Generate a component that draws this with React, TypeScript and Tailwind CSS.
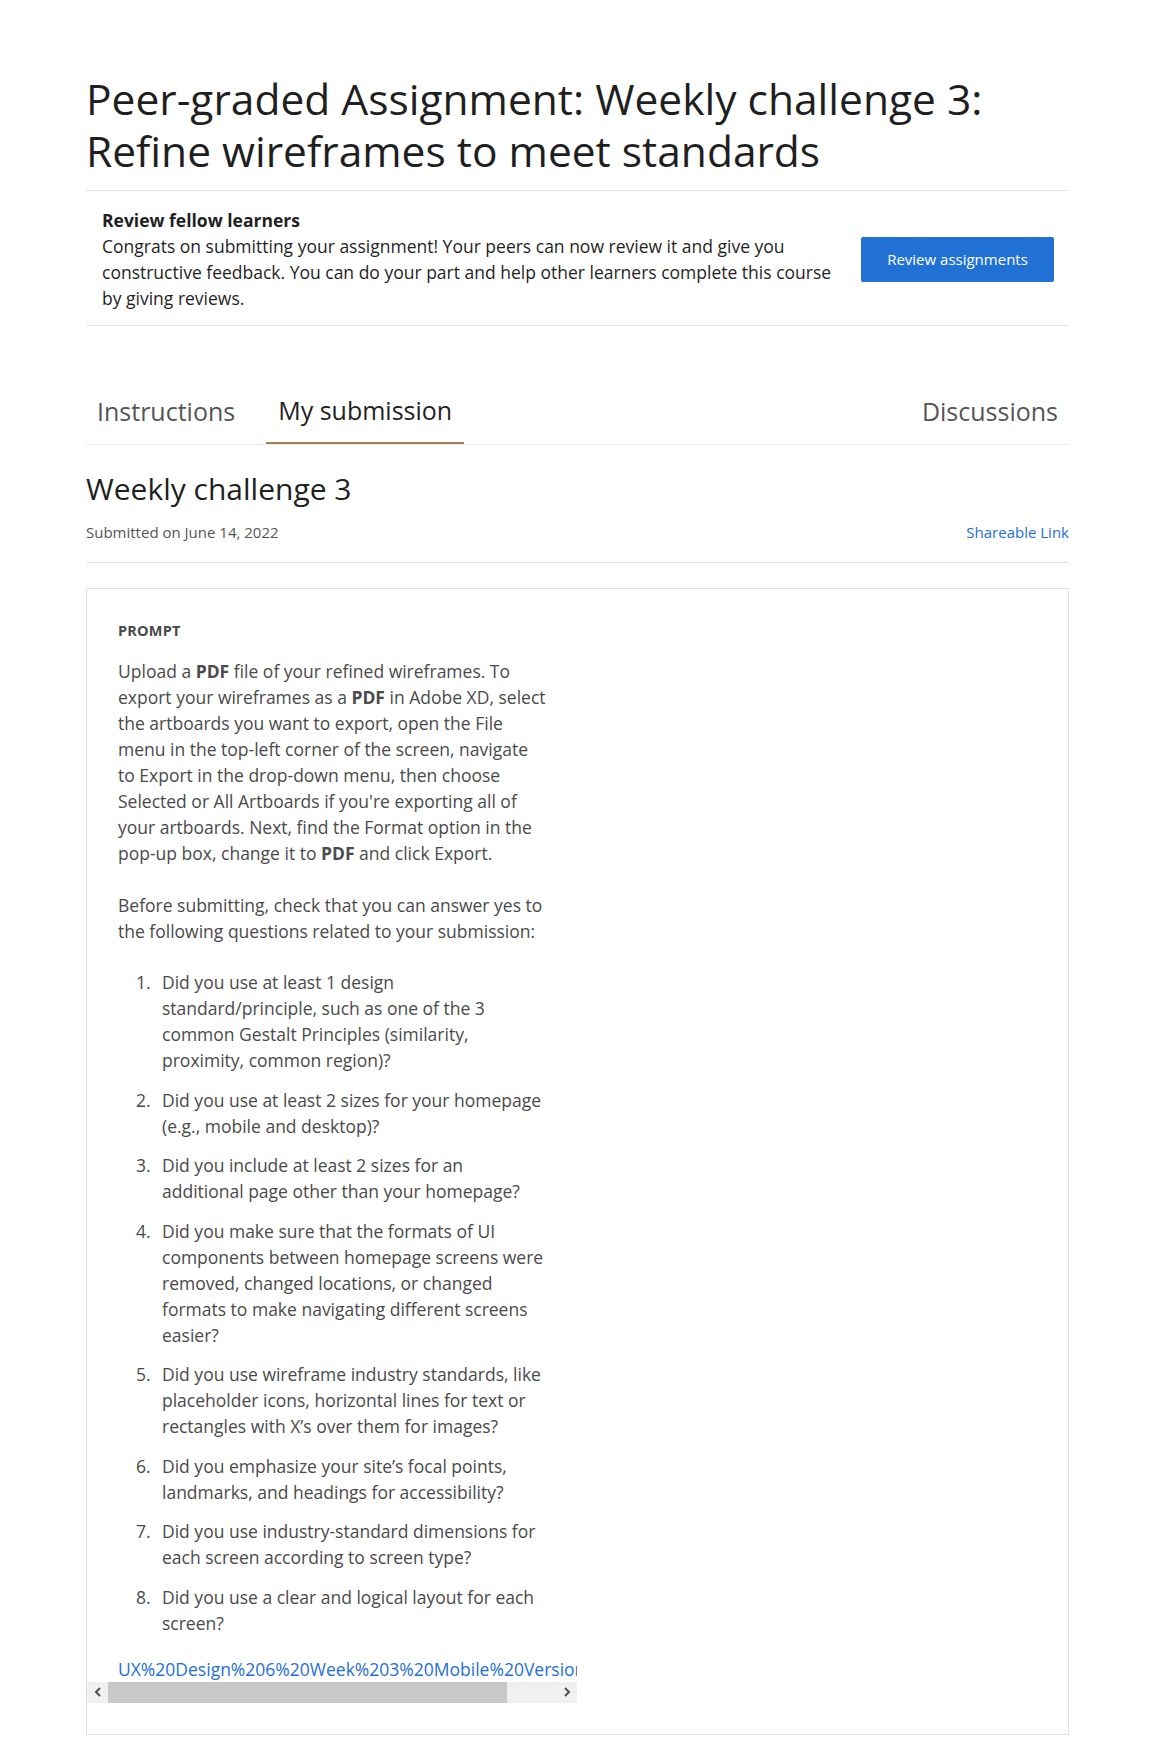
const questions = [
  "Did you use at least 1 design standard/principle, such as one of the 3 common Gestalt Principles (similarity, proximity, common region)?",
  "Did you use at least 2 sizes for your homepage (e.g., mobile and desktop)?",
  "Did you include at least 2 sizes for an additional page other than your homepage?",
  "Did you make sure that the formats of UI components between homepage screens were removed, changed locations, or changed formats to make navigating different screens easier?",
  "Did you use wireframe industry standards, like placeholder icons, horizontal lines for text or rectangles with X\u2019s over them for images?",
  "Did you emphasize your site\u2019s focal points, landmarks, and headings for accessibility?",
  "Did you use industry-standard dimensions for each screen according to screen type?",
  "Did you use a clear and logical layout for each screen?",
];

function Tab({ label, active }: { label: string; active?: boolean }) {
  return (
    <div
      className={
        active
          ? "-mb-px flex h-[64px] items-center border-b-2 border-[#a08050] px-[12px] text-[25px] text-[#1f1f1f]"
          : "flex h-[64px] items-center px-[11px] text-[25px] text-[#555555]"
      }
    >
      {label}
    </div>
  );
}

function FakeScrollbar() {
  return (
    <div className="flex h-[21px] w-full bg-[#f0f0f0]">
      <div className="flex w-[21px] items-center justify-center">
        <svg width="8" height="10" viewBox="0 0 8 10">
          <path d="M6 1 L2 5 L6 9" fill="none" stroke="#505050" strokeWidth="2" />
        </svg>
      </div>
      <div className="h-full w-[399px] bg-[#c8c8c8]" />
      <div className="flex flex-1 items-center justify-end pr-[6px]">
        <svg width="8" height="10" viewBox="0 0 8 10">
          <path d="M2 1 L6 5 L2 9" fill="none" stroke="#505050" strokeWidth="2" />
        </svg>
      </div>
    </div>
  );
}

export default function App() {
  return (
    <div className="min-h-[1750px] bg-white font-['Open_Sans',sans-serif] text-[#1f1f1f]">
      <div className="ml-[86px] w-[983px] pt-[73px]">
        <h1 className="border-b border-[#e5e5e5] pb-[13px] text-[42.5px] leading-[52px] font-normal">
          Peer-graded Assignment: Weekly challenge 3: Refine wireframes to meet standards
        </h1>

        <div className="flex items-center border-b border-[#e5e5e5] pt-4 pb-[14px] pl-4 pr-[15px]">
          <div className="flex-1 pr-6 text-[17.5px] leading-[26px] text-[#1f1f1f]">
            <div className="font-bold">Review fellow learners</div>
            <p>
              Congrats on submitting your assignment! Your peers can now review it and give you
              constructive feedback. You can do your part and help other learners complete this
              course by giving reviews.
            </p>
          </div>
          <button className="h-[45px] w-[193px] rounded-[2px] bg-[#2171d5] text-[15px] text-white">
            Review assignments
          </button>
        </div>

        <div className="mt-[54px] flex gap-[20px] border-b border-[#ebebeb]">
          <Tab label="Instructions" />
          <Tab label="My submission" active />
          <div className="ml-auto">
            <Tab label="Discussions" />
          </div>
        </div>

        <h2 className="mt-[26px] text-[30px] leading-[36px] font-normal text-[#1f1f1f]">
          Weekly challenge 3
        </h2>
        <div className="mt-[15px] flex items-center justify-between border-b border-[#e1e1e1] pb-[20px] text-[15px] leading-[20px]">
          <span className="text-[#555555]">Submitted on June 14, 2022</span>
          <a className="text-[#1f6fd6]">Shareable Link</a>
        </div>

        <div className="mt-[25px] border border-[#e1e1e1] pb-[31px]">
          <div className="w-[490px] overflow-hidden">
            <div className="pl-[31px] pt-[32px]">
              <div className="text-[14.5px] leading-[20px] font-bold tracking-[0.2px] text-[#4a4a4a]">
                PROMPT
              </div>
              <div className="mt-[17px] w-[430px] text-[17.5px] leading-[26px] text-[#4a4a4a]">
                <p>
                  Upload a <b>PDF</b> file of your refined wireframes. To export your wireframes as
                  a <b>PDF</b> in Adobe XD, select the artboards you want to export, open the File
                  menu in the top-left corner of the screen, navigate to Export in the drop-down
                  menu, then choose Selected or All Artboards if you're exporting all of your
                  artboards. Next, find the Format option in the pop-up box, change it to{" "}
                  <b>PDF</b> and click Export.
                </p>
                <p className="mt-[26px]">
                  Before submitting, check that you can answer yes to the following questions
                  related to your submission:
                </p>
                <ol className="mt-[25px] flex flex-col gap-[13.5px]">
                  {questions.map((q, i) => (
                    <li key={i} className="flex pl-[18px]">
                      <span className="w-[26px] shrink-0">{i + 1}.</span>
                      <span className="flex-1">{q}</span>
                    </li>
                  ))}
                </ol>
              </div>
              <div className="mt-[20px] whitespace-nowrap text-[17.5px] leading-[26px] text-[#1f6fd6]">
                UX%20Design%206%20Week%203%20Mobile%20Version%20Wireframes.pdf
              </div>
            </div>
            <FakeScrollbar />
          </div>
        </div>
      </div>
    </div>
  );
}
